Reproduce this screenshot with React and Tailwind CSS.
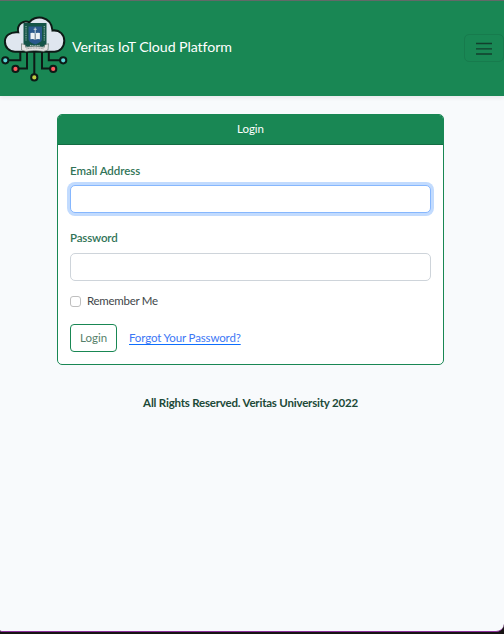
function Logo() {
  return (
    <svg width="68" height="68" viewBox="0 0 68 68" className="block shrink-0" fill="none">
      <g stroke="#0d1a16" strokeWidth="2">
        <path d="M20.3 37v8.3H8M27 37v16.6h-9M34.3 37v24M42 37v16.6h8M48.8 37v8.3H60" />
        <circle cx="5.3" cy="45.3" r="3.1" fill="#5bd6d8" />
        <circle cx="15.5" cy="53.9" r="3.1" fill="#ff5b5f" />
        <circle cx="34.3" cy="62.4" r="3.1" fill="#bdce42" />
        <circle cx="53.2" cy="53.9" r="3.1" fill="#ff5b5f" />
        <circle cx="63.2" cy="45.3" r="3.1" fill="#5bd6d8" />
        <path
          d="M15 36.700C9 36.700 4.900 32 4.900 26.500S10 16.500 18.200 17.300C16.500 9.500 23.500 4.500 29.500 7.300C34 -.2 51 -.2 52.500 15.500C60 14.500 64.300 20 64.300 25.800C64.300 32 60 36.700 54.500 36.700Z"
          fill="#dfe6ef"
        />
      </g>
      <path d="M23.500 8h23v20.500c0 3-6 4-11.500 5.500c-5.500-1.500-11.500-2.500-11.500-5.500z" fill="#155448" />
      <path d="M28.500 11.500h13.500v12.500c0 3-4 4-6.700 5.500C32 28 28.500 27 28.500 24z" fill="#2b598c" />
      <path d="M30.500 18q3-.9 4.700.7q1.700-1.600 4.700-.7v6.300q-3-.7-4.700.7q-1.700-1.400-4.700-.7z" fill="#edf2f5" />
      <path d="M35.200 12.500v6M33.700 14.300h3" stroke="#c6d6d8" strokeWidth="1" />
      <path d="M35.200 19v6" stroke="#314d61" strokeWidth=".8" />
      <path d="M26 11v15M44.300 11v15" stroke="#83a99b" strokeWidth="1.300" strokeDasharray="1 .8" />
      <path d="M30 30.300q5 1.400 10 0" stroke="#b8cbc4" strokeWidth="1.300" strokeDasharray="1.200 .5" />
      <path d="M21.500 28.700l4 1.200v2.300q9-2 19 0v-2.300l4-1.200l-.5 6.300l-4.500 1.400q-8.500-2-17.500 0l-4.500-1.400z" fill="#e7e5e4" stroke="#52665e" strokeWidth=".6" />
      <path d="M26.500 33.900q8.500-1.900 17.500 0" stroke="#798782" strokeWidth=".9" strokeDasharray="1 .6" />
    </svg>
  );
}

function Navbar() {
  return (
    <nav className="flex h-24 items-center justify-between border-t border-[#626968] bg-[#198754] shadow-[0_2px_4px_rgba(0,0,0,0.07)]">
      <a className="flex items-center text-white">
        <Logo />
        <span className="ml-[4px] pb-[3px] text-[14.2px] tracking-[-0.08px] whitespace-nowrap">Veritas IoT Cloud Platform</span>
      </a>
      <button aria-label="Toggle navigation" className="mb-px flex h-7 w-10 items-center justify-center rounded-[5px] border border-[#177b4d]">
        <svg width="16" height="13" viewBox="0 0 16 13" stroke="#123f2c" strokeWidth="1.300">
          <path d="M0 1.500h16M0 6.800h16M0 12h16" />
        </svg>
      </button>
    </nav>
  );
}

export default function App() {
  return (
    <div className="flex h-[634px] w-[504px] flex-col overflow-hidden bg-[#171313] font-[Lato,'Nunito',sans-serif] text-[11.5px] text-[#212529]">
      <div className="flex h-[632px] flex-col rounded-br-lg rounded-bl-[2px] border-b border-[#8e319e] bg-[#f8fafc]">
        <Navbar />
        <main className="ml-[57px] mt-[18px] w-[387px]">
          <section className="flex h-[251px] flex-col rounded-[5px] border border-[#198754] bg-white">
            <header className="flex h-[30px] shrink-0 items-center justify-center rounded-t-[4px] border-b border-[#136c43] bg-[#198754] pb-px text-white">
              <span className="tracking-[-0.05px]">Login</span>
            </header>
            <form className="flex flex-col px-3">
              <label htmlFor="email" className="mt-[17px] h-[18px] leading-[18px] font-semibold tracking-[-0.05px] text-[#317458]">Email Address</label>
              <input id="email" type="email" className="mt-[5px] h-7 rounded-[5px] border border-[#86b7fe] bg-white px-2 shadow-[0_0_0_3px_#c2dbfe] outline-none" />
              <label htmlFor="password" className="mt-4 h-[18px] leading-[18px] font-semibold tracking-[-0.16px] text-[#317458]">Password</label>
              <input id="password" type="password" className="mt-[6px] h-7 rounded-[5px] border border-[#ced4da] bg-white px-2 outline-none" />
              <div className="mt-[11px] flex h-[18px] items-center">
                <input id="remember" type="checkbox" className="h-[11px] w-[11px] appearance-none rounded-[3px] border border-[#bfbfbf] bg-white" />
                <label htmlFor="remember" className="ml-[6px] text-[11.5px] tracking-[-0.28px] text-[#42474b]">Remember Me</label>
              </div>
              <div className="mt-[14px] flex h-7 items-center">
                <button type="button" className="h-7 w-[47px] rounded-[4px] border border-[#198754] pb-px text-[#567f6a]">Login</button>
                <a className="ml-3 whitespace-nowrap pb-px tracking-[-0.14px] text-[#3d77f5] underline decoration-[#0d6efd] underline-offset-2">Forgot Your Password?</a>
              </div>
            </form>
          </section>
          <footer className="mt-[29px] h-[18px] text-center leading-[18px] font-bold tracking-[-0.2px] whitespace-nowrap text-[#1c4938]">
            All Rights Reserved. Veritas University 2022
          </footer>
        </main>
      </div>
    </div>
  );
}
